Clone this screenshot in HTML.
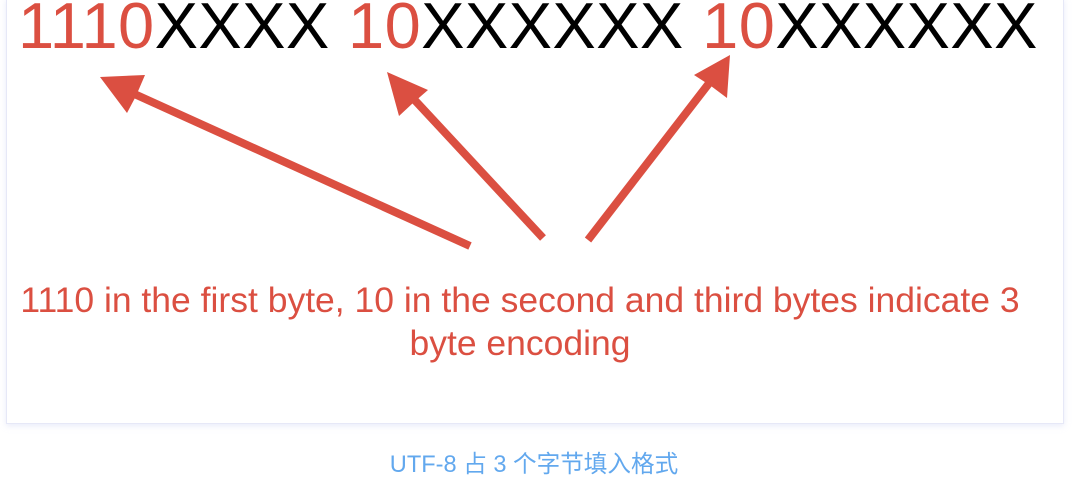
<!DOCTYPE html>
<html><head><meta charset="utf-8"><style>
body{margin:0;width:1080px;height:478px;background:#fff;position:relative;overflow:hidden;font-family:"Liberation Sans",Arial,sans-serif}
.box{position:absolute;left:6px;top:-2px;width:1056px;height:424px;border:1px solid #e6e8f7;box-shadow:0 2px 6px rgba(200,205,240,.4);background:#fff}
.top{position:absolute;left:18px;top:-11px;font-size:65px;letter-spacing:0.4px;white-space:nowrap;color:#000;line-height:74px}
.r{color:#db4f41}
.cap{position:absolute;left:0;width:1040px;top:279px;text-align:center;color:#db4f41;font-size:35.5px;line-height:43px;white-space:nowrap}
.sub{position:absolute;left:0;width:1068px;top:451px;text-align:center;color:#62a8ee;font-size:23.6px;font-family:"Liberation Sans","Noto Sans CJK SC",sans-serif;line-height:28px}
</style></head><body>
<div class="box"></div>
<div class="top"><span class="r">1110</span>XXXX <span class="r">10</span>XXXXXX <span class="r">10</span>XXXXXX</div>
<svg width="1080" height="478" style="position:absolute;left:0;top:0">
<g stroke="#db4f41" stroke-width="8" fill="#db4f41">
<line x1="470" y1="246" x2="130" y2="92"/>
<line x1="543" y1="238" x2="410" y2="95"/>
<line x1="588" y1="240" x2="710" y2="82"/>
</g>
<g fill="#db4f41">
<polygon points="100,77 145,75 136,96 127,113"/>
<polygon points="387,72 428,90 413,103 399,116"/>
<polygon points="730,55 727,98 711,86 694,75"/>
</g>
</svg>
<div class="cap">1110 in the first byte, 10 in the second and third bytes indicate 3<br>byte encoding</div>
<div class="sub">UTF-8 占 3 个字节填入格式</div>
</body></html>
